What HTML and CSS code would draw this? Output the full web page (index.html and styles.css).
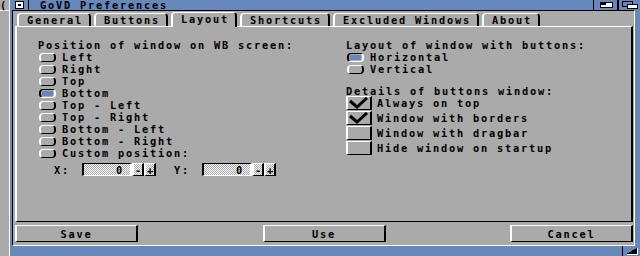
FILE: index.html
```html
<!DOCTYPE html>
<html lang="en">
<head>
    <meta charset="UTF-8">
    <title>GoVD Preferences</title>
    <link rel="stylesheet" href="styles.css">
</head>
<body>

<div class="screen-edge">(</div>

<div class="window">
    <div class="titlebar">
        <div class="close-gadget"><span></span></div>
        <div class="title">GoVD Preferences</div>
        <div class="zoom-gadget">
            <svg width="23" height="10" viewBox="0 0 23 10" shape-rendering="crispEdges">
                <rect x="6.5" y="2.5" width="12" height="5" fill="#fff" stroke="#000"/>
                <rect x="7" y="3" width="5" height="2" fill="#000"/>
            </svg>
        </div>
        <div class="depth-gadget">
            <svg width="21" height="10" viewBox="0 0 21 10" shape-rendering="crispEdges">
                <rect x="3.5" y="1.5" width="10" height="5" fill="#6688bb" stroke="#000"/>
                <rect x="8.5" y="4.5" width="10" height="4" fill="#fff" stroke="#000"/>
            </svg>
        </div>
    </div>

    <div class="frame">
        <div class="tabs">
            <div class="tab">General</div>
            <div class="tab">Buttons</div>
            <div class="tab active">Layout</div>
            <div class="tab">Shortcuts</div>
            <div class="tab">Excluded Windows</div>
            <div class="tab">About</div>
        </div>

        <div class="panel">
            <div class="col">
                <div class="heading">Position of window on WB screen:</div>
                <div class="option"><span class="radio"></span>Left</div>
                <div class="option"><span class="radio"></span>Right</div>
                <div class="option"><span class="radio"></span>Top</div>
                <div class="option"><span class="radio on"></span>Bottom</div>
                <div class="option"><span class="radio"></span>Top - Left</div>
                <div class="option"><span class="radio"></span>Top - Right</div>
                <div class="option"><span class="radio"></span>Bottom - Left</div>
                <div class="option"><span class="radio"></span>Bottom - Right</div>
                <div class="option"><span class="radio"></span>Custom position:</div>
                <div class="coords">
                    <span class="coord-label">X:</span>
                    <span class="number">0</span>
                    <span class="arrow">-</span><span class="arrow">+</span>
                    <span class="coord-label y">Y:</span>
                    <span class="number">0</span>
                    <span class="arrow">-</span><span class="arrow">+</span>
                </div>
            </div>

            <div class="col">
                <div class="heading">Layout of window with buttons:</div>
                <div class="option"><span class="radio on"></span>Horizontal</div>
                <div class="option"><span class="radio"></span>Vertical</div>

                <div class="heading second">Details of buttons window:</div>
                <div class="check-row"><span class="checkbox"><svg width="22" height="12" viewBox="0 0 22 12"><polyline points="2,4 9,10 19,1" fill="none" stroke="#000" stroke-width="3"/></svg></span>Always on top</div>
                <div class="check-row"><span class="checkbox"><svg width="22" height="12" viewBox="0 0 22 12"><polyline points="2,4 9,10 19,1" fill="none" stroke="#000" stroke-width="3"/></svg></span>Window with borders</div>
                <div class="check-row"><span class="checkbox"></span>Window with dragbar</div>
                <div class="check-row"><span class="checkbox"></span>Hide window on startup</div>
            </div>
        </div>

        <div class="actions">
            <button>Save</button>
            <button>Use</button>
            <button>Cancel</button>
        </div>
    </div>

    <div class="bottombar">
        <div class="size-gadget">
            <svg width="17" height="10" viewBox="0 0 17 10" shape-rendering="crispEdges">
                <polygon points="3,8 14,8 14,2" fill="#000"/>
                <polyline points="3.5,8.5 14.5,8.5 14.5,1.5" fill="none" stroke="#fff"/>
            </svg>
        </div>
    </div>
</div>

</body>
</html>
```

FILE: styles.css
```css
body {
    margin: 0;
    display: flex;
    height: 256px;
    overflow: hidden;
    background-color: #aaaaaa;
    font-family: "DejaVu Sans Mono", monospace;
    font-weight: bold;
    font-size: 10.3px;
    letter-spacing: 1.8px;
    line-height: 12px;
    color: #000;
}
.screen-edge {
    width: 9px;
    height: 10px;
    border-bottom: 1px solid #fff;
    line-height: 10px;
    letter-spacing: 0;
}

/* window chrome */
.window {
    width: 631px;
    height: 256px;
    box-sizing: border-box;
    border-left: 1px solid #fff;
    background-color: #6688bb;
    display: flex;
    flex-direction: column;
}
.titlebar {
    height: 10px;
    display: flex;
}
.close-gadget {
    width: 18px;
    border-right: 1px solid #000;
    display: flex;
    align-items: center;
    justify-content: center;
}
.close-gadget span {
    width: 3px;
    height: 2px;
    background-color: #000;
    border: 2px solid #fff;
    outline: 1px solid #000;
}
.title {
    padding: 1px 0 0 11px;
    line-height: 9px;
}
.zoom-gadget {
    margin-left: auto;
    border-left: 1px solid #000;
    width: 23px;
}
.depth-gadget {
    border-left: 2px solid #000;
    width: 21px;
}
.frame {
    flex: 1;
    margin: 0 5px 0 2px;
    border-top: 1px solid #000;
    border-left: 1px solid #000;
    border-right: 1px solid #fff;
    border-bottom: 1px solid #fff;
    background-color: #aaaaaa;
    padding: 0 1px 0 2px;
    display: flex;
    flex-direction: column;
}
.bottombar {
    height: 10px;
    display: flex;
    justify-content: flex-end;
}
.size-gadget {
    border-left: 1px solid #000;
    width: 17px;
}

/* tabs */
.tabs {
    height: 15px;
    padding-left: 2px;
    display: flex;
    align-items: flex-end;
    gap: 3px;
}
.tab {
    height: 12px;
    padding: 0 6px 0 8px;
    border-top: 1px solid #fff;
    border-left: 2px solid #fff;
    border-right: 2px solid #000;
    border-radius: 4px 4px 0 0;
}
.tab.active {
    height: 14px;
    margin-bottom: -1px;
    position: relative;
    z-index: 1;
    background-color: #aaaaaa;
}

/* page panel */
.panel {
    height: 196px;
    box-sizing: border-box;
    border-top: 1px solid #fff;
    border-left: 2px solid #fff;
    border-right: 2px solid #000;
    border-bottom: 1px solid #000;
    padding: 12px 0 0 21px;
    display: grid;
    grid-template-columns: 308px 1fr;
    align-items: start;
}
.heading {
    height: 12px;
}
.heading.second {
    margin-top: 10px;
    height: 11px;
}
.option {
    height: 12px;
    display: flex;
    align-items: center;
    gap: 6px;
    padding-left: 1px;
}
.radio {
    width: 13px;
    height: 7px;
    border: 1px solid;
    border-width: 1px 2px;
    border-color: #fff #000 #000 #fff;
    border-radius: 4px;
}
.radio.on {
    border-color: #000 #fff #fff #000;
    padding: 1px;
    width: 11px;
    height: 5px;
    background-color: #6688bb;
    background-clip: content-box;
}
.check-row {
    height: 15px;
    display: flex;
    align-items: flex-start;
    gap: 5px;
    line-height: 14px;
}
.checkbox {
    width: 22px;
    height: 12px;
    border-top: 1px solid #fff;
    border-left: 2px solid #fff;
    border-right: 2px solid #000;
    border-bottom: 1px solid #000;
}
.checkbox svg {
    display: block;
}

/* custom position */
.coords {
    margin-top: 4px;
    padding-left: 16px;
    display: flex;
    align-items: center;
    height: 13px;
}
.coord-label {
    width: 28px;
}
.coord-label.y {
    margin-left: 18px;
}
.number {
    width: 40px;
    height: 11px;
    padding-right: 6px;
    text-align: right;
    border-top: 1px solid #000;
    border-left: 2px solid #000;
    border-right: 2px solid #fff;
    border-bottom: 1px solid #fff;
    background: repeating-conic-gradient(#ffffff 0 25%, #aaaaaa 0 50%) 0 0 / 2px 2px;
}
.arrow {
    width: 8px;
    height: 11px;
    text-align: center;
    letter-spacing: 0;
    border-top: 1px solid #fff;
    border-left: 2px solid #fff;
    border-right: 2px solid #000;
    border-bottom: 1px solid #000;
    background: repeating-conic-gradient(#ffffff 0 25%, #aaaaaa 0 50%) 0 0 / 2px 2px;
}

/* bottom buttons */
.actions {
    margin-top: 3px;
    display: flex;
    justify-content: space-between;
}
button {
    width: 123px;
    height: 17px;
    padding: 0;
    font: inherit;
    letter-spacing: inherit;
    color: #000;
    background-color: #aaaaaa;
    border-top: 1px solid #fff;
    border-left: 2px solid #fff;
    border-right: 2px solid #000;
    border-bottom: 1px solid #000;
    border-radius: 0;
}
```
